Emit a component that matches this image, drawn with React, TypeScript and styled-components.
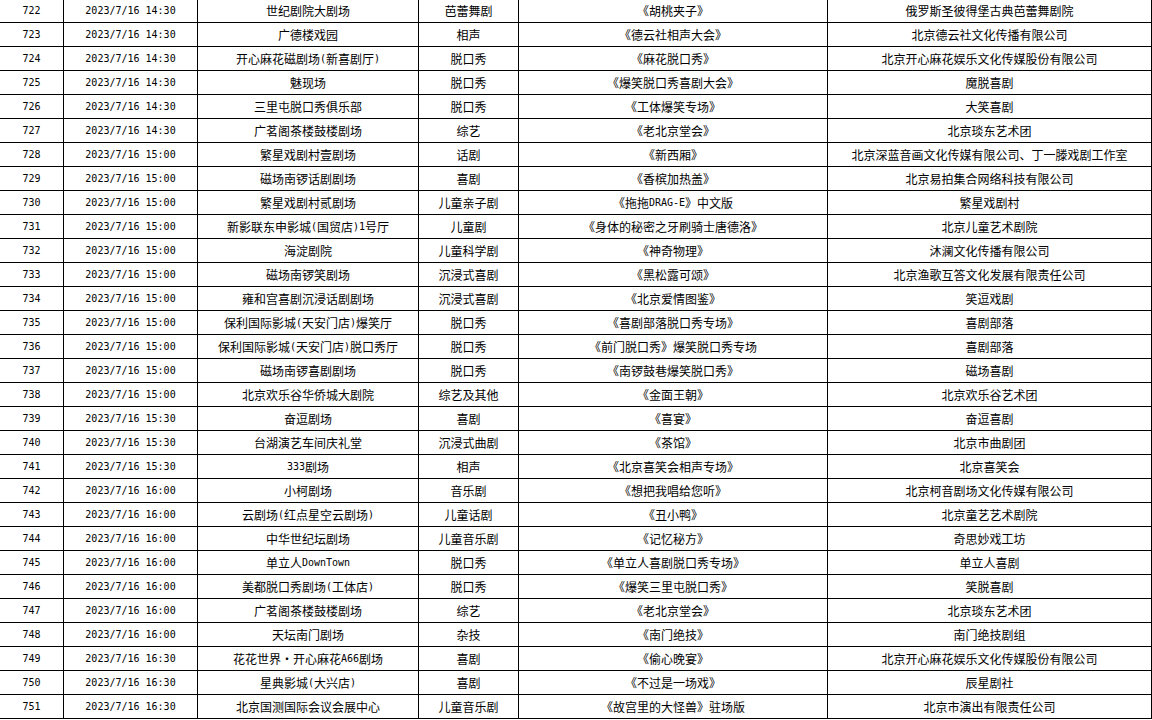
import React from "react";
import styled, { createGlobalStyle } from "styled-components";

const GlobalStyle = createGlobalStyle`
  html, body {
    margin: 0;
    padding: 0;
    background: #fff;
  }
  body {
    font-family: "Noto Sans CJK SC", "Noto Sans", sans-serif;
    color: #000;
  }
`;

const Viewport = styled.div`
  width: 1152px;
  height: 720px;
  overflow: hidden;
  background: #fff;
`;

// sheet is scrolled down by one pixel
const Sheet = styled.div`
  margin-top: -1px;
`;

const Row = styled.div`
  display: grid;
  grid-template-columns: 64px 134px 221px 100px 309px 324px;
  height: 24px;
`;

const Cell = styled.div<{ $mono?: boolean }>`
  box-sizing: border-box;
  display: flex;
  align-items: center;
  justify-content: center;
  border-right: 1px solid #000;
  border-bottom: 1px solid #000;
  font-family: ${(p) =>
    p.$mono
      ? `"DejaVu Sans Mono", "Liberation Mono", monospace`
      : `"Noto Sans CJK SC", "Noto Sans", sans-serif`};
  font-size: ${(p) => (p.$mono ? "10px" : "12px")};
  line-height: 1;
  white-space: nowrap;
  padding-top: 1px;
`;

const Latin = styled.span`
  font-family: "DejaVu Sans Mono", "Liberation Mono", monospace;
  font-size: 10px;
`;

interface Show {
  no: number;
  time: string;
  venue: string;
  kind: string;
  title: string;
  troupe: string;
}

const raw: [string, string, string, string, string][] = [
  ["14:30", "世纪剧院大剧场", "芭蕾舞剧", "《胡桃夹子》", "俄罗斯圣彼得堡古典芭蕾舞剧院"],
  ["14:30", "广德楼戏园", "相声", "《德云社相声大会》", "北京德云社文化传播有限公司"],
  ["14:30", "开心麻花磁剧场(新喜剧厅)", "脱口秀", "《麻花脱口秀》", "北京开心麻花娱乐文化传媒股份有限公司"],
  ["14:30", "魅现场", "脱口秀", "《爆笑脱口秀喜剧大会》", "魔脱喜剧"],
  ["14:30", "三里屯脱口秀俱乐部", "脱口秀", "《工体爆笑专场》", "大笑喜剧"],
  ["14:30", "广茗阁茶楼鼓楼剧场", "综艺", "《老北京堂会》", "北京琰东艺术团"],
  ["15:00", "繁星戏剧村壹剧场", "话剧", "《新西厢》", "北京深蓝音画文化传媒有限公司、丁一滕戏剧工作室"],
  ["15:00", "磁场南锣话剧剧场", "喜剧", "《香槟加热盖》", "北京易拍集合网络科技有限公司"],
  ["15:00", "繁星戏剧村贰剧场", "儿童亲子剧", "《拖拖DRAG-E》中文版", "繁星戏剧村"],
  ["15:00", "新影联东申影城(国贸店)1号厅", "儿童剧", "《身体的秘密之牙刷骑士唐德洛》", "北京儿童艺术剧院"],
  ["15:00", "海淀剧院", "儿童科学剧", "《神奇物理》", "沐澜文化传播有限公司"],
  ["15:00", "磁场南锣笑剧场", "沉浸式喜剧", "《黑松露可颂》", "北京渔歌互答文化发展有限责任公司"],
  ["15:00", "雍和宫喜剧沉浸话剧剧场", "沉浸式喜剧", "《北京爱情图鉴》", "笑逗戏剧"],
  ["15:00", "保利国际影城(天安门店)爆笑厅", "脱口秀", "《喜剧部落脱口秀专场》", "喜剧部落"],
  ["15:00", "保利国际影城(天安门店)脱口秀厅", "脱口秀", "《前门脱口秀》爆笑脱口秀专场", "喜剧部落"],
  ["15:00", "磁场南锣喜剧剧场", "脱口秀", "《南锣鼓巷爆笑脱口秀》", "磁场喜剧"],
  ["15:00", "北京欢乐谷华侨城大剧院", "综艺及其他", "《金面王朝》", "北京欢乐谷艺术团"],
  ["15:30", "奋逗剧场", "喜剧", "《喜宴》", "奋逗喜剧"],
  ["15:30", "台湖演艺车间庆礼堂", "沉浸式曲剧", "《茶馆》", "北京市曲剧团"],
  ["15:30", "333剧场", "相声", "《北京喜笑会相声专场》", "北京喜笑会"],
  ["16:00", "小柯剧场", "音乐剧", "《想把我唱给您听》", "北京柯音剧场文化传媒有限公司"],
  ["16:00", "云剧场(红点星空云剧场)", "儿童话剧", "《丑小鸭》", "北京童艺艺术剧院"],
  ["16:00", "中华世纪坛剧场", "儿童音乐剧", "《记忆秘方》", "奇思妙戏工坊"],
  ["16:00", "单立人DownTown", "脱口秀", "《单立人喜剧脱口秀专场》", "单立人喜剧"],
  ["16:00", "美都脱口秀剧场(工体店)", "脱口秀", "《爆笑三里屯脱口秀》", "笑脱喜剧"],
  ["16:00", "广茗阁茶楼鼓楼剧场", "综艺", "《老北京堂会》", "北京琰东艺术团"],
  ["16:00", "天坛南门剧场", "杂技", "《南门绝技》", "南门绝技剧组"],
  ["16:30", "花花世界·开心麻花A66剧场", "喜剧", "《偷心晚宴》", "北京开心麻花娱乐文化传媒股份有限公司"],
  ["16:30", "星典影城(大兴店)", "喜剧", "《不过是一场戏》", "辰星剧社"],
  ["16:30", "北京国测国际会议会展中心", "儿童音乐剧", "《故宫里的大怪兽》驻场版", "北京市演出有限责任公司"],
];

const shows: Show[] = raw.map(([t, venue, kind, title, troupe], i) => ({
  no: 722 + i,
  time: `2023/7/16 ${t}`,
  venue,
  kind,
  title,
  troupe,
}));

// half-width runs are set in the narrow mono face, like the sheet's song font
const Mixed: React.FC<{ text: string }> = ({ text }) => (
  <>
    {text.split(/([\x20-\x7e]+)/).map((part, i) =>
      /^[\x20-\x7e]+$/.test(part) ? <Latin key={i}>{part}</Latin> : part
    )}
  </>
);

const App: React.FC = () => {
  return (
    <Viewport>
      <GlobalStyle />
      <Sheet>
        {shows.map((s) => (
          <Row key={s.no}>
            <Cell $mono>{s.no}</Cell>
            <Cell $mono>{s.time}</Cell>
            <Cell>
              <Mixed text={s.venue} />
            </Cell>
            <Cell>{s.kind}</Cell>
            <Cell>
              <Mixed text={s.title} />
            </Cell>
            <Cell>{s.troupe}</Cell>
          </Row>
        ))}
      </Sheet>
    </Viewport>
  );
};

export default App;
